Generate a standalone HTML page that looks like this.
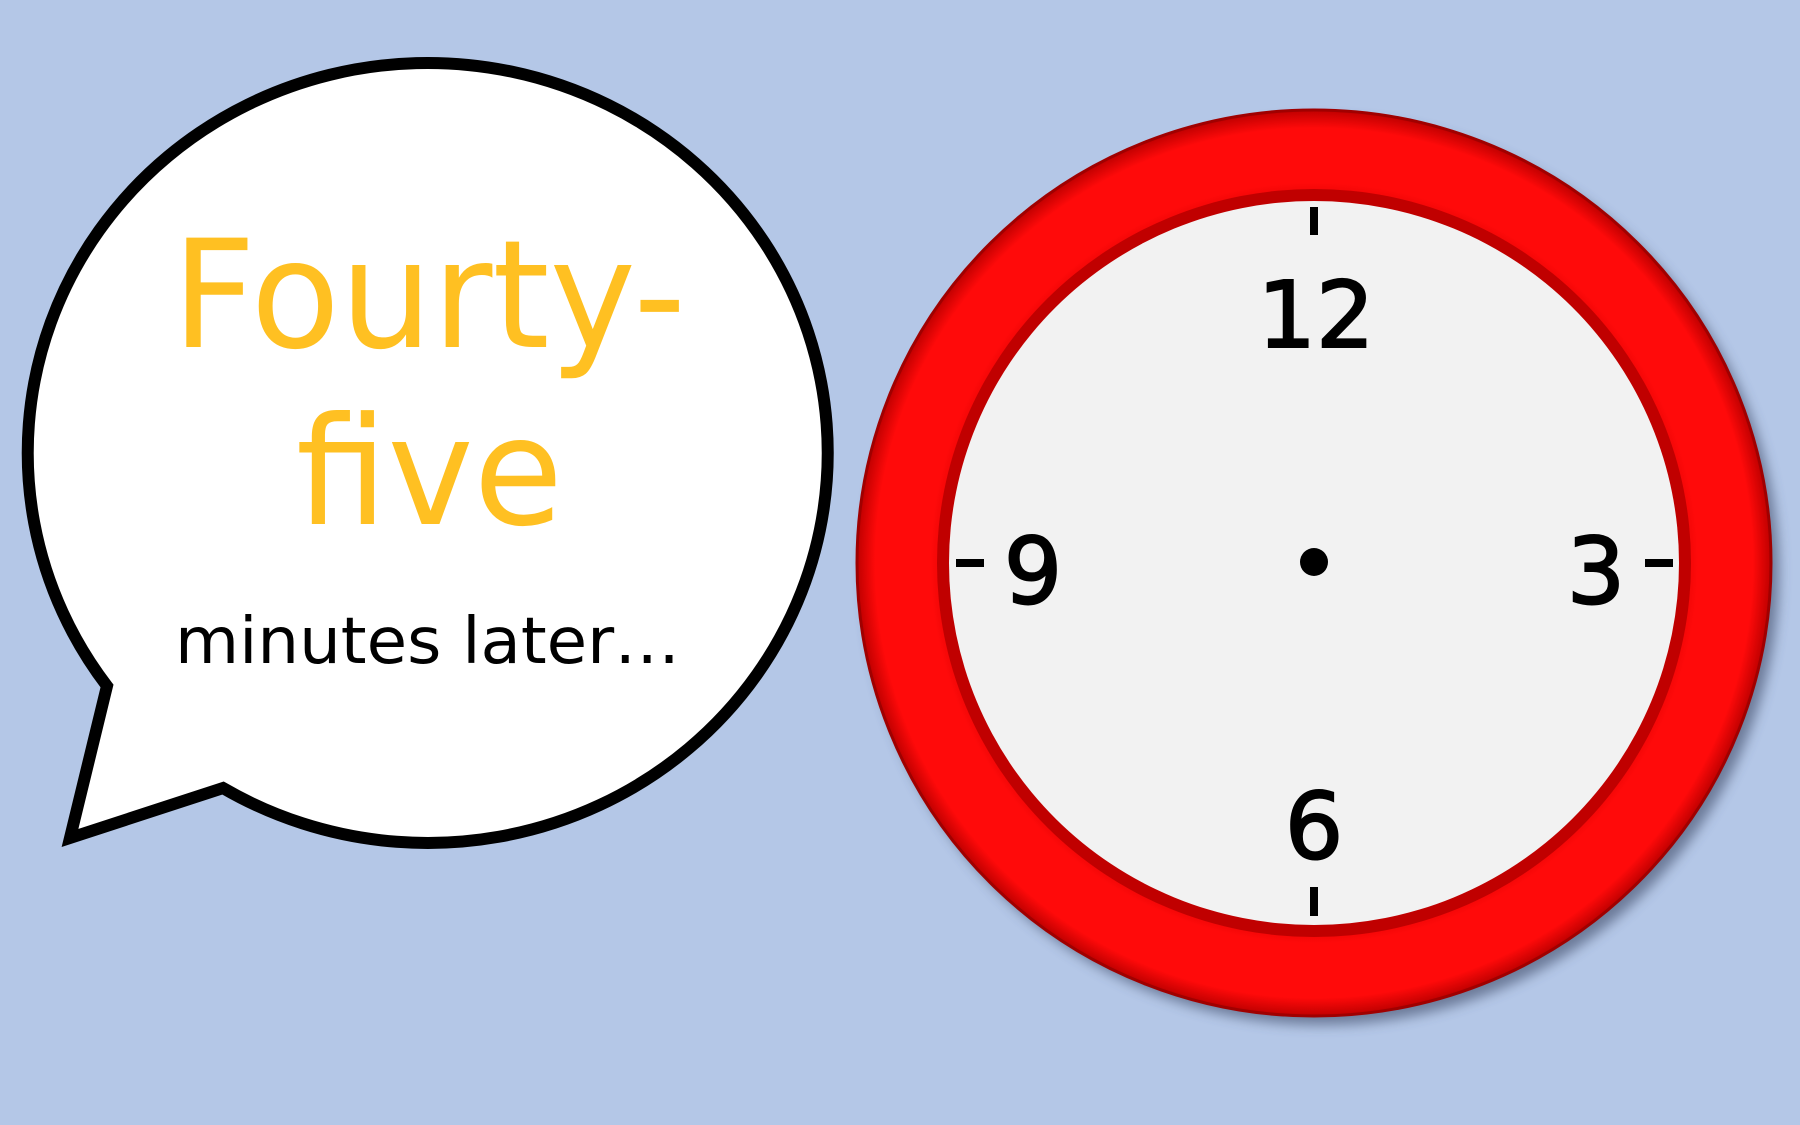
<!DOCTYPE html>
<html><head><meta charset="utf-8"><style>
html,body{margin:0;padding:0;background:#B4C7E7;}
svg{display:block}
</style></head><body>
<svg width="1800" height="1125" viewBox="0 0 1800 1125" xmlns="http://www.w3.org/2000/svg">
<defs>
<radialGradient id="rg" cx="0.5" cy="0.5" r="0.5">
<stop offset="0.78" stop-color="#d80000"/>
<stop offset="0.84" stop-color="#ff0a0a"/>
<stop offset="0.96" stop-color="#ff0a0a"/>
<stop offset="1" stop-color="#c00000"/>
</radialGradient>
<filter id="sh" x="-10%" y="-10%" width="130%" height="130%"><feGaussianBlur stdDeviation="6"/></filter>
</defs>
<rect width="1800" height="1125" fill="#B4C7E7"/>
<path d="M107,686 A400,390 0 1 1 223,788 L70,838 Z" fill="#fff" stroke="#000" stroke-width="12" stroke-linejoin="miter"/>
<g font-family="'DejaVu Sans','Liberation Sans',sans-serif">
<text x="172" y="347" font-size="150" fill="#FFC022" textLength="514" lengthAdjust="spacingAndGlyphs">Fourty-</text>
<text x="296" y="524" font-size="150" fill="#FFC022" textLength="267" lengthAdjust="spacingAndGlyphs">five</text>
<text x="175" y="663" font-size="64" fill="#000" textLength="505" lengthAdjust="spacingAndGlyphs">minutes later…</text>
</g>
<ellipse cx="1322" cy="572" rx="457" ry="453" fill="#3c4a66" opacity="0.6" filter="url(#sh)"/>
<ellipse cx="1314" cy="563" rx="457" ry="453" fill="url(#rg)" stroke="#a00000" stroke-width="3"/>
<ellipse cx="1314" cy="563" rx="377" ry="374" fill="#c00000"/>
<ellipse cx="1314" cy="563" rx="365" ry="362" fill="#F2F2F2"/>
<g fill="#000">
<rect x="1310" y="207" width="8" height="28"/>
<rect x="1310" y="887" width="8" height="29"/>
<rect x="956" y="559" width="28" height="8"/>
<rect x="1645" y="559" width="28" height="8"/>
<circle cx="1314" cy="562" r="14"/>
</g>
<g font-family="'DejaVu Sans','Liberation Sans',sans-serif" font-size="92" fill="#000" text-anchor="middle" stroke="#000" stroke-width="2">
<text x="1316" y="347">12</text>
<text x="1596" y="603">3</text>
<text x="1033" y="603">9</text>
<text x="1314" y="858">6</text>
</g>
</svg>
</body></html>
